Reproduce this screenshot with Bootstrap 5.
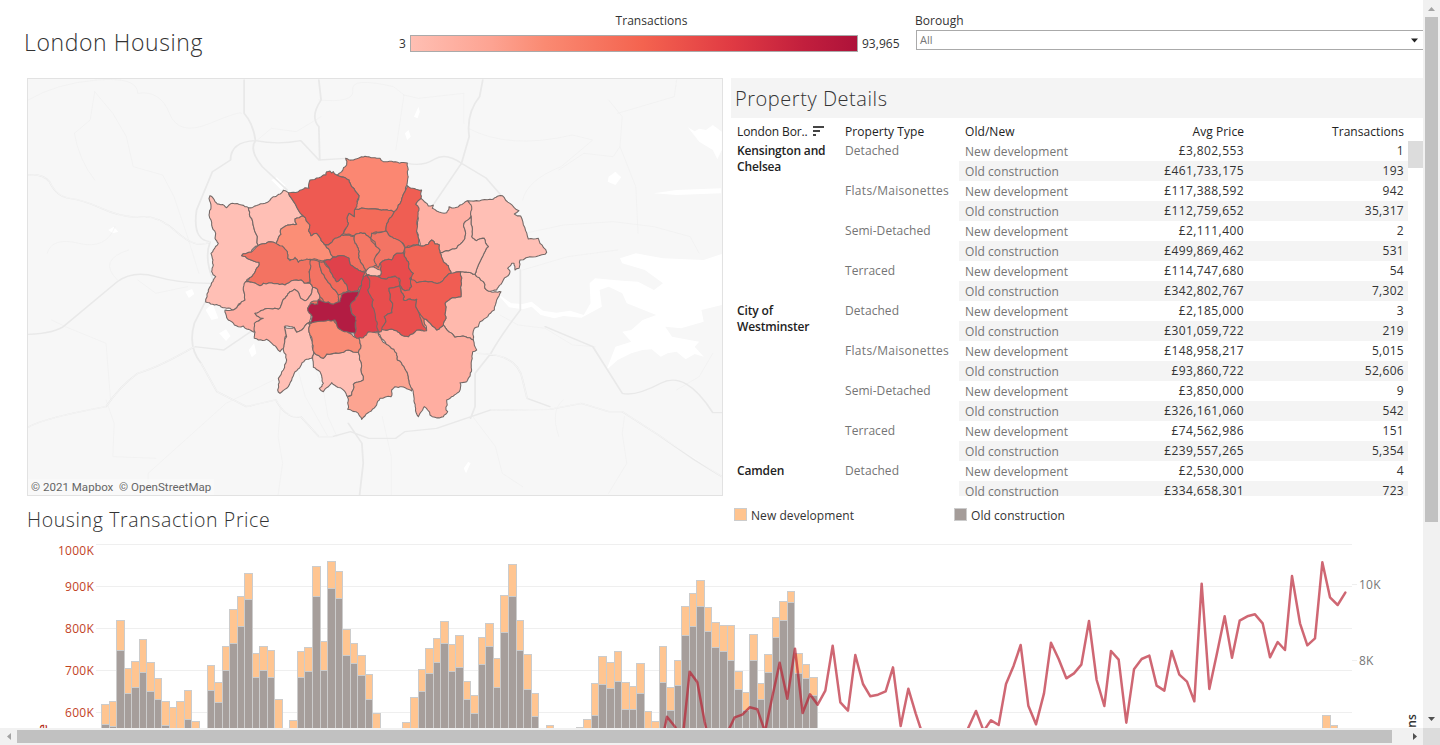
<!DOCTYPE html>
<html lang="en">
<head>
<meta charset="utf-8">
<title>London Housing</title>
<link rel="stylesheet" href="https://cdn.jsdelivr.net/npm/bootstrap@5.3.0/dist/css/bootstrap.min.css">
<script src="https://cdn.jsdelivr.net/npm/bootstrap@5.3.0/dist/js/bootstrap.bundle.min.js"></script>
<style>
body{font-family:"Open Sans","Noto Sans",sans-serif;font-size:12px;line-height:16px;color:#333;background:#fff;letter-spacing:.06px}
.frame{width:1440px;height:745px;display:grid;grid-template-columns:1423px 17px;grid-template-rows:728px 17px}
.top-bar{height:78px}
.page-title{font-size:23px;font-weight:300;line-height:30px;letter-spacing:.6px;width:372px;padding:27px 0 0 24px;color:#333}
.scale-box{width:504px;padding:13px 0 0 27px}
.scale-line{margin-top:6px;width:505px}
.scale-line>*{flex:none}
.scale-name{width:505px}
.ramp{width:448px;height:17px;border:1px solid #aaa;background:linear-gradient(90deg,#ffbfb3,#fda392 18%,#fa8a72 30%,#f4634f 52%,#e03a43 72%,#c21f3d 88%,#ae123a)}
.pick{padding:13px 0 0 39px}
.pick-box{height:20px;margin:1px 0 0 1px;border:1px solid #aaa;border-right:0;font-size:11px;color:#777;padding:0 5px 0 3px}
.map-box{width:696px;height:418px;margin-left:27px;border:1px solid #e2e2e2;background:#f7f7f7}
.map-box svg,.plot,.bar-v svg,.bar-h svg{display:block}
.credit{position:absolute;left:0;bottom:0;font-family:Roboto,sans-serif;font-size:11.5px;line-height:16px;color:#666;background:rgba(250,250,250,.7);padding:0 3px;letter-spacing:.03px}
.details{width:692px;height:418px}
.panel-title{font-size:20px;font-weight:300;line-height:40px;height:40px;letter-spacing:.55px;background:#f4f4f4;padding:1px 0 0 4px}
.thead-row{height:23px;font-weight:500;color:#222;line-height:28px}
.thead-row svg{position:relative;top:-2px;left:2px}
.c1{width:114px;padding-left:6px}.c2{width:114px}.c3{width:114px;padding-left:6px}.c4{width:171px;text-align:right}.c5{width:164px;text-align:right;padding-right:4px}
.trow{height:20px;line-height:20px}
.trow .c3{line-height:22px}
.trow .c4{letter-spacing:.42px}
.trow .c5{letter-spacing:.3px}
.vals{width:449px}
.trow.odd{background:#f4f4f4}
.c2 div,.soft{color:#757575}
.c2 div{height:40px;line-height:20px}
.wide{letter-spacing:.31px}
.borough{font-weight:600;color:#222;height:160px;padding-top:2px;letter-spacing:-.15px}
.knob{width:15px;height:27px;background:#dcdcdc}
.sub{height:40px}
.sub h2{font-size:19.500px;font-weight:300;line-height:26px;letter-spacing:.62px;margin:11px 0 0 27px;width:707px}
.chip{width:13px;height:13px;border:1px solid #ccc}
.bar-v,.bar-h{background:#f1f1f1}.corner{background:#dcdcdc}
.plot{letter-spacing:.25px}
</style>
</head>
<body class="overflow-hidden">
<div class="frame">
<main class="overflow-hidden">
  <header class="top-bar d-flex">
    <h1 class="page-title m-0">London Housing</h1>
    <div class="scale-box">
      <div class="text-center scale-name">Transactions</div>
      <div class="d-flex align-items-center scale-line"><span class="me-1">3</span><div class="ramp"></div><span class="ms-1">93,965</span></div>
    </div>
    <div class="pick flex-fill">
      <div>Borough</div>
      <div class="pick-box d-flex justify-content-between align-items-center"><span>All</span>
        <svg width="7" height="5"><path d="M0 .5H7L3.5 4.5Z" fill="#222"/></svg></div>
    </div>
  </header>
  <section class="d-flex">
    <div class="map-box position-relative">
      <svg width="694" height="416" viewBox="28 79 694 416">
        <g transform="translate(20 70) scale(.4528 .3333)" fill="none" stroke-linecap="round" stroke-linejoin="round">
          <g fill="#fff">
            <path d="M1052 668L1085 700L1110 702L1130 695L1155 722L1185 728L1215 722L1245 735L1260 700L1258 640L1270 625L1330 632L1365 635L1400 660L1420 640L1380 600L1330 580L1325 565L1360 550L1420 565L1510 570L1550 552V705L1505 720L1510 755L1460 775L1425 770L1440 800L1500 815L1490 830L1510 860L1490 852L1470 868L1450 845L1430 850L1415 860L1395 838L1375 840L1350 850L1320 870L1295 900L1315 830L1350 815L1330 785L1350 780L1375 750L1405 735L1340 700L1330 670L1300 650L1280 660L1285 710L1240 743L1200 738L1180 745L1150 735L1130 710L1110 718L1080 712Z"/>
            <path d="M1475 172L1490 184L1500 176L1515 180L1530 165L1550 185V240L1540 268L1530 240L1500 215Z M1300 320L1315 305L1328 322L1315 345L1298 335Z M1400 370L1450 360L1548 355V370L1450 375Z"/>
            <path d="M365 665l15-8 5 15-12 12zM410 720l15-20 13 45-15 5zM440 790l15-12 10 20-10 15zM505 840l12-20 5 30-10 12zM850 190l8-10 5 20-8 10zM870 140l10-30 3 15-5 20zM195 480l12-10 10 15-12 5zM555 330l12-8 20 25-10 12zM980 1195l10-20 5 5-10 30z"/>
          </g>
          <g stroke="#efefef" stroke-width="1.6">
            <path d="M18 90Q80 40 170 30T260 70Q310 60 330 130T420 160T490 130M165 65L205 130L235 200L250 290L315 315L340 380L370 500L395 610M120 190L155 150L165 65M120 190Q130 270 165 330M520 215L555 175L610 185L665 140M660 90Q740 100 735 60T825 50L848 75L830 240M990 175Q1080 240 1220 195L1265 210L1195 290Q1120 330 1110 390M848 75L880 85L980 70V160M1300 90L1330 140L1325 230L1360 350L1365 490M1325 230L1310 260L1245 250L1190 300M1320 130L1445 80L1450 30M1115 490L1200 465L1310 455L1400 470L1480 500L1500 550M1110 600L1210 560L1320 540M1060 735L1100 765L1160 775L1220 825L1270 830M1200 990Q1170 1020 1190 1100M1000 1040L1050 1130L1065 1210L1110 1250M1335 1040L1330 1090L1340 1180L1300 1270M190 990L208 1060L205 1160L300 1165M283 1275V1210L365 1110L455 1000L560 930M575 1010L570 1100L580 1180L570 1275M610 880L630 980L680 1100M645 870L670 960L680 1040L700 1100M1450 960L1500 920L1530 850M800 1040L820 1160V1275M70 750L100 770L190 820L200 990M60 550Q70 500 130 520T210 470M215 630Q170 570 240 540M370 650L300 670L260 630"/>
          </g>
          <g stroke="#e9e9e9" stroke-width="4">
            <path d="M18 315Q50 310 65 335Q80 380 110 385T180 415T260 442Q300 430 345 485T420 515M420 515Q380 510 390 420L425 305L465 270Q465 215 520 212Q570 225 620 212L660 270L720 265M855 280Q890 290 915 268T975 280L1030 325L1065 380M495 30V130Q515 160 520 212Q505 240 535 290L590 360M660 30L665 90Q640 140 660 170L662 270M1022 30L1015 80Q985 130 992 200L975 280L915 400M420 515Q405 570 430 640L385 760Q370 830 400 880L435 965L500 1010L565 990Q590 1050 620 1040L660 1100H690L730 1085L770 1105H830L850 1085L920 1075L1040 1020L1170 1018L1240 1000L1300 1025H1330L1410 1095L1490 1170L1550 1220M18 1072Q50 1045 190 1010Q220 950 260 910Q310 890 385 830L450 840L515 780M18 793Q80 790 100 765L215 635Q250 600 300 620T420 640M1105 600V720Q1060 800 1040 850L1005 910V1010L995 1045M1010 850Q1100 850 1110 930L1120 985L1170 1010M1160 770L1265 830L1330 970Q1360 980 1415 940T1530 1028H1550M725 1060L755 1120L758 1180L750 1275"/>
          </g>
          <g stroke="#fbfbfb" stroke-width="1.5">
            <path d="M18 315Q50 310 65 335Q80 380 110 385T180 415T260 442Q300 430 345 485T420 515M18 1072Q50 1045 190 1010Q220 950 260 910Q310 890 385 830M400 880L435 965L500 1010L565 990Q590 1050 620 1040L660 1100H690M1040 1020L1170 1018L1240 1000L1300 1025H1330L1410 1095L1550 1220M1010 850Q1100 850 1110 930L1120 985"/>
          </g>
        </g>
        <g transform="translate(195 145) scale(.33333)">
          <path d="M330 215L470 180L600 200L660 300L740 400L690 550L500 560L360 520L300 340Z" fill="#f2705f"/>
          <g id="boroughs" stroke="#736866" stroke-width="3.2" stroke-linejoin="round"></g>
        </g>
      </svg>
      <div class="credit">© 2021 Mapbox&nbsp; © OpenStreetMap</div>
    </div>
    <div class="details overflow-hidden ms-2">
      <div class="panel-title">Property Details</div>
      <div class="thead-row d-flex"><div class="c1"><span style="letter-spacing:-.12px">London Bor..</span> <svg width="11" height="10" viewBox="0 0 11 10"><path d="M0 1H11M0 5H7M0 9H3" stroke="#444" stroke-width="1.8"/></svg></div><div class="c2">Property Type</div><div class="c3">Old/New</div><div class="c4">Avg Price</div><div class="c5">Transactions</div></div>
      <div class="d-flex">
        <div class="c1"><div class="borough">Kensington and<br>Chelsea</div><div class="borough">City of<br>Westminster</div><div class="borough">Camden</div></div>
        <div class="c2" id="types"></div>
        <div class="vals" id="vals"></div>
        <div class="knob"></div>
      </div>
    </div>
  </section>
  <div class="sub d-flex">
    <h2>Housing Transaction Price</h2>
    <div class="d-flex pt-1 mt-1" style="width:220px"><span class="chip mt-1 me-1" style="background:#ffc48f"></span><span class="mt-1">New development</span></div>
    <div class="d-flex pt-1 mt-1"><span class="chip mt-1 me-1" style="background:#a49c99"></span><span class="mt-1">Old construction</span></div>
  </div>
  <svg class="plot" width="1423" height="192" viewBox="0 536 1423 192">
    <path d="M96 544.5H1352M96 586.5H1352M96 628.5H1352M96 670.5H1352M96 712.5H1352M1352 584.5h5M1352 660.5h5" stroke="#efefef"/>
    <g fill="#c2431f" text-anchor="end"><text x="94" y="555">1000K</text><text x="94" y="591">900K</text><text x="94" y="633">800K</text><text x="94" y="675">700K</text><text x="94" y="717">600K</text></g>
    <g fill="#777"><text x="1359" y="589">10K</text><text x="1359" y="665">8K</text></g>
    <text transform="translate(47 779) rotate(-90)" fill="#b5301c" font-weight="600">Avg Price</text>
    <text transform="translate(1416 791) rotate(-90)" font-weight="600" fill="#333">Transactions</text>
    <g id="bars" stroke="#ccc"></g>
    <g transform="translate(650 540) scale(.33333)"><path d="M28 640L51 530L75 560L97 605L119 395L142 427L164 545L187 650L210 620L232 578L254 532L277 524L299 502L322 508L345 575L367 470L389 368L412 476L435 326L458 519L480 463L503 494L526 452L548 317L571 487L594 512L616 345L639 432L661 469L684 464L707 454L729 382L752 558L775 446L797 520L820 590L888 700L945 585L978 513L1001 573L1023 541L1046 555L1068 432L1091 377L1112 315L1135 497L1158 553L1182 460L1203 308L1226 357L1249 415L1272 400L1294 374L1317 243L1340 420L1363 498L1383 333L1406 359L1429 548L1452 388L1475 357L1498 347L1520 437L1543 452L1565 333L1588 404L1611 425L1633 484L1655 131L1678 447L1701 340L1724 229L1746 353L1769 242L1792 229L1815 223L1838 250L1860 352L1883 306L1905 330L1926 108L1950 250L1972 316L1995 295L2017 67L2040 172L2063 195L2086 158" fill="none" stroke="#b71c2e" stroke-opacity=".67" stroke-width="7.5" stroke-linejoin="round" stroke-linecap="round"/></g>
  </svg>
</main>
<div class="bar-v"><svg width="17" height="728"><path d="M5 11H12L8.5 7Z" fill="#a3a3a3"/><rect x="2" y="17" width="13" height="505" fill="#c1c1c1"/><path d="M5 717H12L8.5 721Z" fill="#505050"/></svg></div>
<div class="bar-h"><svg width="1423" height="17"><path d="M11 5V12L7 8.500Z" fill="#a3a3a3"/><rect x="17" y="2" width="1375" height="13" fill="#c1c1c1"/><path d="M1413 5V12L1417 8.500Z" fill="#505050"/></svg></div>
<div class="corner"></div>
</div>
<script>
// Borough outlines: fill, then points
const shapes = [
["#ffbfb5","45,152 60,170 95,188 112,175 140,180 160,188 165,215 173,230 190,302 175,310 168,322 145,326 140,332 160,342 192,352 190,365 178,385 155,405 150,420 145,435 150,465 145,472 130,478 115,495 75,482 32,471 40,440 55,405 62,395 50,380 55,360 52,340 48,325 55,315 70,295 60,280 62,265 50,240 48,225 42,210 48,185 42,160"],
["#ffbfb5","160,188 210,175 235,155 265,136 280,143 325,213 300,222 305,238 285,240 258,252 256,262 258,268 248,285 244,297 236,292 200,297 190,302 173,230 165,215"],
["#fb8772","425,90 440,80 455,60 452,40 470,45 510,34 535,38 555,40 565,50 590,49 637,54 637,80 635,122 630,140 610,180 598,200 560,196 480,192 492,152 470,125 462,105"],
["#f46b59","480,192 560,196 598,200 580,230 573,258 548,262 530,265 527,280 510,265 497,263 478,272 445,266 460,235 457,215 462,205 478,215"],
["#fb8e76","325,213 345,240 341,258 348,272 365,265 388,298 414,335 405,345 385,348 370,345 345,343 335,350 320,345 310,352 302,340 290,345 278,340 277,320 268,310 244,297 248,285 258,268 256,262 258,252 285,240 305,238 300,222"],
["#ee5a52","280,143 310,140 330,128 342,130 345,105 372,98 393,90 395,80 405,78 410,84 415,80 425,90 462,105 470,125 492,152 487,175 480,192 478,215 462,205 457,215 460,235 445,265 440,270 420,280 400,300 388,298 365,265 348,272 341,258 345,240 325,213"],
["#f37362","190,302 200,297 236,292 262,303 277,320 278,340 285,347 300,337 310,352 345,343 350,355 342,380 345,415 340,412 328,415 318,405 290,407 270,420 205,415 195,422 170,412 152,410 178,385 190,365 192,352 160,342 140,332 145,326 168,322"],
["#ffafa4","152,410 170,412 195,422 205,415 270,420 290,407 318,405 328,415 345,415 353,427 343,455 330,467 315,455 305,437 298,433 285,440 262,470 250,493 205,495 180,505 185,512 205,520 180,535 178,562 155,552 145,543 130,545 110,530 95,518 90,495 115,495 150,465 145,435"],
["#ffafa3","353,427 368,433 375,455 375,465 350,470 338,490 352,505 343,532 320,555 305,562 298,548 270,543 275,570 268,610 255,620 235,600 215,583 190,585 178,580 180,562 178,535 205,520 185,512 180,505 205,495 250,493 262,470 285,440 298,433 305,437 315,455 330,467 343,455"],
["#ffbfb5","268,545 280,550 298,547 305,562 320,555 343,532 345,570 357,625 350,640 330,645 300,680 275,730 255,745 248,735 250,700 265,675 275,645 265,615 275,575"],
["#ffbfb5","357,622 385,640 395,627 430,625 460,615 490,622 505,705 475,718 470,750 455,753 450,740 410,713 395,728 385,740 373,730 385,715 375,680 355,667"],
["#fa8c76","343,532 415,525 430,550 460,563 480,577 492,580 497,610 490,622 460,615 430,625 395,627 385,640 357,622 345,570"],
["#fca491","492,580 520,560 550,563 560,585 585,605 605,625 607,645 615,648 640,695 650,738 640,733 620,725 600,725 590,735 588,755 555,760 545,780 510,813 500,823 490,805 458,793 457,755 470,750 475,718 505,705 490,622 497,610"],
["#ffb9ad","797,380 840,388 865,410 870,430 880,438 918,440 905,465 898,495 855,530 850,545 838,550 835,585 812,575 780,577 745,540 753,520 750,475 765,462 798,455"],
["#ffaea1","550,565 560,553 605,557 620,570 640,575 665,555 695,555 688,520 700,530 725,555 745,540 780,577 812,575 835,585 845,615 833,620 830,675 815,710 795,713 793,740 755,765 753,795 758,800 745,815 720,817 705,810 698,795 688,785 675,805 670,815 662,790 655,745 640,695 615,648 607,645 605,625 585,605"],
["#ffbfb5","820,167 885,163 922,152 972,197 958,207 977,213 1000,282 1030,280 1035,295 1055,322 1050,328 975,345 972,370 960,375 957,355 950,355 938,370 945,378 935,395 925,405 918,418 905,435 880,438 870,430 865,410 840,388 850,360 880,305 868,280 845,287 830,275 828,215"],
["#ffb0a4","678,160 700,183 715,180 712,190 725,198 755,203 762,185 780,188 795,180 817,167 830,185 828,215 807,235 812,265 807,285 785,310 735,323 733,300 720,297 710,285 700,298 675,302 665,260 668,215 662,178"],
["#ffbfb5","828,215 830,275 845,287 868,280 880,305 850,360 840,388 797,380 768,385 760,362 745,350 735,323 785,310 807,285 812,265 807,235"],
["#ef5e53","637,122 680,135 678,160 662,178 672,190 665,235 672,300 630,307 620,292 605,288 588,275 573,258 580,230 598,200 610,180 630,140"],
["#f37464","530,265 573,258 588,275 620,292 630,308 625,323 605,325 590,345 570,345 555,355 550,368 540,360 535,345 555,315 543,305 540,290 527,280"],
["#f57765","478,272 497,263 510,265 527,280 543,305 555,315 537,345 545,360 530,368 515,378 505,362 495,345 490,310 480,295"],
["#f2705f","400,300 420,280 440,270 478,272 480,295 490,310 495,345 505,362 515,378 500,380 467,360 462,340 432,332 414,335 388,298"],
["#f16455","630,308 675,302 700,298 710,285 720,297 733,300 735,323 745,350 760,362 768,385 745,405 735,413 665,413 650,405 645,393 655,385 645,375 640,350 628,335"],
["#f37363","347,345 373,350 378,375 395,405 415,432 430,450 432,470 415,478 385,470 375,455 368,433 353,427 345,415 343,380"],
["#f16a5b","373,350 387,350 405,375 425,410 440,400 455,418 460,438 445,442 430,450 415,432 395,405 378,375"],
["#e0414b","385,350 405,345 414,337 432,332 462,340 467,360 500,380 512,380 505,400 500,420 490,435 470,442 458,435 455,418 440,400 425,410 405,375"],
["#e84d4d","515,390 545,393 572,402 606,393 613,423 582,430 585,465 593,475 591,503 568,515 573,530 558,560 545,560 532,485 518,435"],
["#e03e4b","505,395 515,390 522,400 524,415 518,435 535,465 532,485 541,515 550,560 520,560 505,578 485,580 477,568 482,555 480,515 470,505 468,470 480,460 493,438 500,420"],
["#e84b4c","555,355 570,345 590,345 605,325 625,323 628,335 640,350 645,375 655,385 650,395 645,400 650,425 643,435 630,437 618,425 613,400 600,393 575,402 545,393 557,390 557,375"],
["#ffbfb2","512,382 520,370 540,368 557,375 557,390 535,392 515,388"],
["#f05d53","645,400 650,425 643,435 630,437 618,425 618,440 628,455 625,465 665,463 662,480 670,500 685,520 700,530 725,555 745,540 753,520 750,475 765,462 798,455 797,380 768,385 745,405 735,413 665,413"],
["#e94f4e","613,423 618,440 628,455 625,465 665,463 662,480 670,500 680,530 695,557 665,555 640,575 620,570 605,557 560,553 573,530 568,515 591,503 593,475 585,465 582,430"],
["#b31c43","338,490 350,475 368,477 370,463 378,467 385,470 415,478 435,470 440,450 460,440 493,438 480,465 468,475 470,505 482,515 480,565 455,560 430,550 420,525 400,525 345,537 352,515"]
];
// Roughen each edge; the same pair of endpoints always gives the same wobble
function wob(a, b, n) {
  const s = Math.sin(a[0] * 12.9 + a[1] * 78.2 + b[0] * 37.7 + b[1] * 9.3) * 43758.5, len = Math.hypot(b[0]-a[0], b[1]-a[1]);
  if (n === 0 || len < 9) return [];
  const d = ((s - Math.floor(s)) - .5) * Math.min(6, len * .3);
  const m = [(a[0]+b[0])/2 + (b[1]-a[1])/len*d, (a[1]+b[1])/2 - (b[0]-a[0])/len*d];
  return [...wob(a, m, n-1), m, ...wob(m, b, n-1)];
}
document.getElementById("boroughs").innerHTML = shapes.map(([f, p]) => {
  const q = p.split(" ").map(s => s.split(",").map(Number)), out = [];
  q.forEach((a, i) => {
    const b = q[(i + 1) % q.length], flip = a[0] > b[0] || (a[0] === b[0] && a[1] > b[1]);
    const w = flip ? wob(b, a, 3).reverse() : wob(a, b, 3);
    out.push(a, ...w);
  });
  return `<polygon fill="${f}" points="${out.map(v => v.map(n => n.toFixed(1)).join()).join(" ")}"/>`;
}).join("");

const rows = [["£3,802,553","1"],["£461,733,175","193"],["£117,388,592","942"],["£112,759,652","35,317"],["£2,111,400","2"],["£499,869,462","531"],["£114,747,680","54"],["£342,802,767","7,302"],["£2,185,000","3"],["£301,059,722","219"],["£148,958,217","5,015"],["£93,860,722","52,606"],["£3,850,000","9"],["£326,161,060","542"],["£74,562,986","151"],["£239,557,265","5,354"],["£2,530,000","4"],["£334,658,301","723"]];
document.getElementById("vals").innerHTML = rows.map((r, i) => `<div class="trow d-flex ${i % 2 ? "odd" : ""}"><div class="c3 soft">${i % 2 ? "Old construction" : "New development"}</div><div class="c4">${r[0]}</div><div class="c5">${r[1]}</div></div>`).join("");
const kinds = ["Detached","Flats/Maisonettes","Semi-Detached","Terraced"];
document.getElementById("types").innerHTML = Array.from({length: 9}, (_, i) => `<div class="${i % 4 === 1 ? "wide" : ""}">${kinds[i % 4]}</div>`).join("");

// Bars by month: slot, top of the stack, top of the old-construction part
const A = [[0,673,734],[1,664,740],[2,421,512],[3,565,641],[4,544,623],[5,478,578],[6,547,635],[7,595,659],[8,664,737],[9,682],[10,664],[11,631,719],[12,724],[14,556,632],[15,607,668],[16,499,572],[17,388,491],[18,349,440],[19,280,359],[20,520,593],[21,499,572],[22,511,593],[23,658],[25,721],[26,514,593],[27,502,575],[28,259,350],[29,484,572],[30,244,326],[31,274,356],[32,448,527],[33,490,551],[34,526,587],[35,583,659],[36,700],[40,727],[41,652]];
const B = [[42,418,485],[43,355,431],[44,325,398],[45,274,341],[46,343,425],[47,316,413],[48,454,509],[49,496,551],[50,322,404],[51,280,349],[52,385,473],[53,196,308],[54,103,200],[55,271,362],[56,373,479],[57,490,560],[59,586],[63,592],[64,568],[65,460,557],[66,379,464],[67,397,476],[68,364,455],[69,457,539],[70,469,539],[71,400,491],[72,544],[73,574],[74,349,458],[75,472,542],[76,391,467],[77,229,317],[78,190,290],[79,151,230],[80,232,305],[81,277,353],[82,286,365],[83,286,392],[84,424,479],[85,487,542],[86,313,392],[87,460,509],[88,373,428],[89,262,323],[90,214,272],[91,184,218],[92,370,431],[93,403,446],[94,442,497]].map(([k, o, g]) => [k, o + 150, g && g + 150]);
const C = [[162,706],[163,736]];
document.getElementById("bars").innerHTML = [...A, ...B, ...C].map(([k, o, g]) => {
  const x = Math.round(101 + 7.537 * k), w = Math.round(101 + 7.537 * (k + 1)) - x, y = v => Math.floor(480 + v / 3);
  const r = (t, c) => `<rect x="${x + .5}" y="${y(t) + .5}" width="${w}" height="${740 - y(t)}" fill="${c}"/>`;
  return r(o, "#ffc591") + (g ? r(g, "#a69e9b") : "");
}).join("");
</script>
</body>
</html>
